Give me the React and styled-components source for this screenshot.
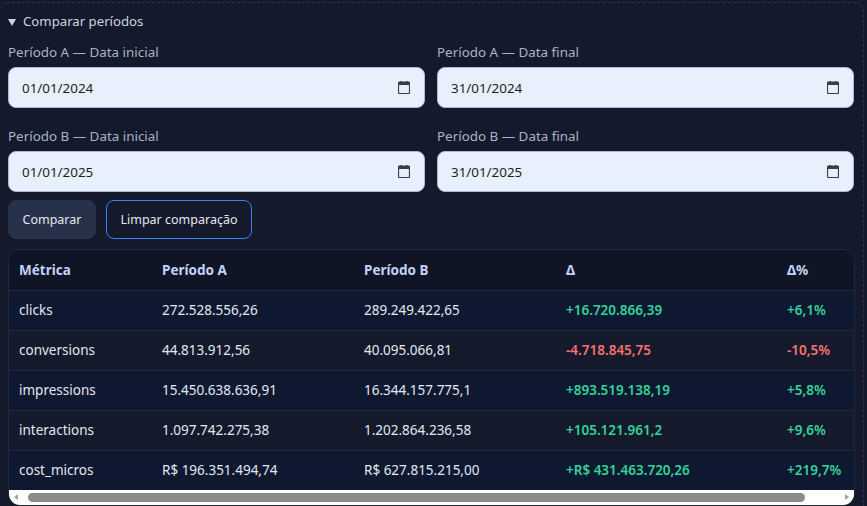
import React from "react";
import styled, { createGlobalStyle } from "styled-components";

const Global = createGlobalStyle`
  html, body { margin: 0; padding: 0; background: #141a2b; overflow: hidden; }
  body { width: 867px; height: 506px; font-family: "Noto Sans", "Open Sans", sans-serif; }
  * { box-sizing: border-box; }
`;

const Page = styled.div`
  padding-top: 2px;
  height: 506px;
  overflow: hidden;
`;

const Panel = styled.div`
  margin-left: -1px;
  width: 865px;
  border: 1px dashed #2b3654;
  border-radius: 8px;
  padding: 8px 8px 16px 8px;
  background: #141a2b;
`;

const Summary = styled.div`
  display: flex;
  align-items: center;
  gap: 7px;
  height: 20px;
  color: #cbd5e1;
  font-size: 13.2px;
  line-height: 20px;
`;

const Caret = styled.span`
  width: 0;
  height: 0;
  margin-top: 2px;
  border-left: 4px solid transparent;
  border-right: 4px solid transparent;
  border-top: 7px solid #cbd5e1;
`;

const Grid = styled.div`
  margin-top: 12px;
  display: grid;
  grid-template-columns: 417px 417px;
  column-gap: 12px;
  row-gap: 19px;
`;

const Field = styled.div`
  display: flex;
  flex-direction: column;
  gap: 6px;
`;

const Label = styled.div`
  font-size: 13.4px;
  line-height: 18px;
  color: #a7b4c8;
`;

const DateBox = styled.div`
  height: 41px;
  border: 1px solid #a9b9dc;
  border-radius: 8px;
  background: #e8f0fe;
  display: flex;
  align-items: center;
  justify-content: space-between;
  padding: 0 14px 0 13px;
  font-size: 13.4px;
  color: #1b1f29;
`;

const Buttons = styled.div`
  margin-top: 8px;
  display: flex;
  gap: 10px;
`;

const Button = styled.button`
  height: 39px;
  padding: 0 13.5px;
  border-radius: 8px;
  font-family: inherit;
  font-size: 12.5px;
  color: #e2e8f0;
  background: ${(p) => (p.$outline ? "transparent" : "#27314a")};
  border: 1px solid ${(p) => (p.$outline ? "#3b82f6" : "#27314a")};
`;

const TableWrap = styled.div`
  margin-top: 10px;
  border: 1px solid #1f2a40;
  border-radius: 12px;
  overflow: hidden;
`;

const Viewport = styled.div`
  overflow: hidden;
`;

const Table = styled.table`
  width: 886px;
  table-layout: fixed;
  border-collapse: collapse;
  font-size: 13.5px;
`;

const Th = styled.th`
  height: 40px;
  text-align: left;
  padding: 0 10px;
  color: #c3d3fb;
  font-weight: 700;
  background: #101525;
  border-bottom: 1px solid #1f2a40;
`;

const Tr = styled.tr`
  background: ${(p) => (p.$alt ? "#141a2b" : "#0e1830")};
`;

const Td = styled.td`
  height: 40px;
  padding: 0 10px;
  color: ${(p) => (p.$tone === "pos" ? "#34d399" : p.$tone === "neg" ? "#f87171" : "#e2e8f0")};
  font-weight: ${(p) => (p.$tone ? 600 : 400)};
  border-bottom: 1px solid ${(p) => (p.$last ? "transparent" : "#1f2a40")};
  white-space: nowrap;
`;

const ScrollTrack = styled.div`
  height: 15px;
  margin-top: -1px;
  background: #ffffff;
  display: flex;
  align-items: center;
`;

const ScrollArrow = styled.div`
  width: 14px;
  height: 15px;
  display: flex;
  align-items: center;
  justify-content: center;
  &::before {
    content: "";
    width: 0;
    height: 0;
    border-top: 3.5px solid transparent;
    border-bottom: 3.5px solid transparent;
    ${(p) =>
      p.$dir === "left"
        ? "border-right: 4px solid #a3a3a3;"
        : "border-left: 4px solid #a3a3a3;"}
  }
`;

const ScrollThumb = styled.div`
  height: 9px;
  margin-left: 5px;
  border-radius: 5px;
  background: #8b8b8b;
`;

const ScrollGap = styled.div`
  flex: 1;
`;

const CalendarIcon = () => (
  <svg width="12" height="13" viewBox="0 0 12 13">
    <rect x="0.5" y="1" width="11" height="11.5" rx="1" fill="none" stroke="#3a3d44" strokeWidth="1.2" />
    <rect x="0.5" y="1" width="11" height="3" fill="#3a3d44" />
    <rect x="2.5" y="0" width="1.4" height="2" fill="#3a3d44" />
    <rect x="8.1" y="0" width="1.4" height="2" fill="#3a3d44" />
  </svg>
);

const fields = [
  ["Período A — Data inicial", "01/01/2024"],
  ["Período A — Data final", "31/01/2024"],
  ["Período B — Data inicial", "01/01/2025"],
  ["Período B — Data final", "31/01/2025"],
];

const rows = [
  ["clicks", "272.528.556,26", "289.249.422,65", "+16.720.866,39", "+6,1%", "pos"],
  ["conversions", "44.813.912,56", "40.095.066,81", "-4.718.845,75", "-10,5%", "neg"],
  ["impressions", "15.450.638.636,91", "16.344.157.775,1", "+893.519.138,19", "+5,8%", "pos"],
  ["interactions", "1.097.742.275,38", "1.202.864.236,58", "+105.121.961,2", "+9,6%", "pos"],
  ["cost_micros", "R$ 196.351.494,74", "R$ 627.815.215,00", "+R$ 431.463.720,26", "+219,7%", "pos"],
];

const viewportWidth = 844;
const contentWidth = 886;
const trackWidth = viewportWidth - 28 - 5;

export default function App() {
  const thumbWidth = Math.round((trackWidth * viewportWidth) / contentWidth) + 4;
  return (
    <Page>
      <Global />
      <Panel>
        <Summary>
          <Caret />
          <span>Comparar períodos</span>
        </Summary>
        <Grid>
          {fields.map(([l, v]) => (
            <Field key={l}>
              <Label>{l}</Label>
              <DateBox>
                <span>{v}</span>
                <CalendarIcon />
              </DateBox>
            </Field>
          ))}
        </Grid>
        <Buttons>
          <Button>Comparar</Button>
          <Button $outline>Limpar comparação</Button>
        </Buttons>
        <TableWrap>
          <Viewport>
            <Table>
              <colgroup>
                <col style={{ width: 143 }} />
                <col style={{ width: 202 }} />
                <col style={{ width: 202 }} />
                <col style={{ width: 221 }} />
                <col style={{ width: 118 }} />
              </colgroup>
              <thead>
                <tr>
                  <Th>Métrica</Th>
                  <Th>Período A</Th>
                  <Th>Período B</Th>
                  <Th>Δ</Th>
                  <Th>Δ%</Th>
                </tr>
              </thead>
              <tbody>
                {rows.map((r, i) => (
                  <Tr key={r[0]} $alt={i % 2 === 1}>
                    <Td $last={i === rows.length - 1}>{r[0]}</Td>
                    <Td $last={i === rows.length - 1}>{r[1]}</Td>
                    <Td $last={i === rows.length - 1}>{r[2]}</Td>
                    <Td $last={i === rows.length - 1} $tone={r[5]}>{r[3]}</Td>
                    <Td $last={i === rows.length - 1} $tone={r[5]}>{r[4]}</Td>
                  </Tr>
                ))}
              </tbody>
            </Table>
          </Viewport>
          <ScrollTrack>
            <ScrollArrow $dir="left" />
            <ScrollThumb style={{ width: thumbWidth }} />
            <ScrollGap />
            <ScrollArrow $dir="right" />
          </ScrollTrack>
        </TableWrap>
      </Panel>
    </Page>
  );
}
